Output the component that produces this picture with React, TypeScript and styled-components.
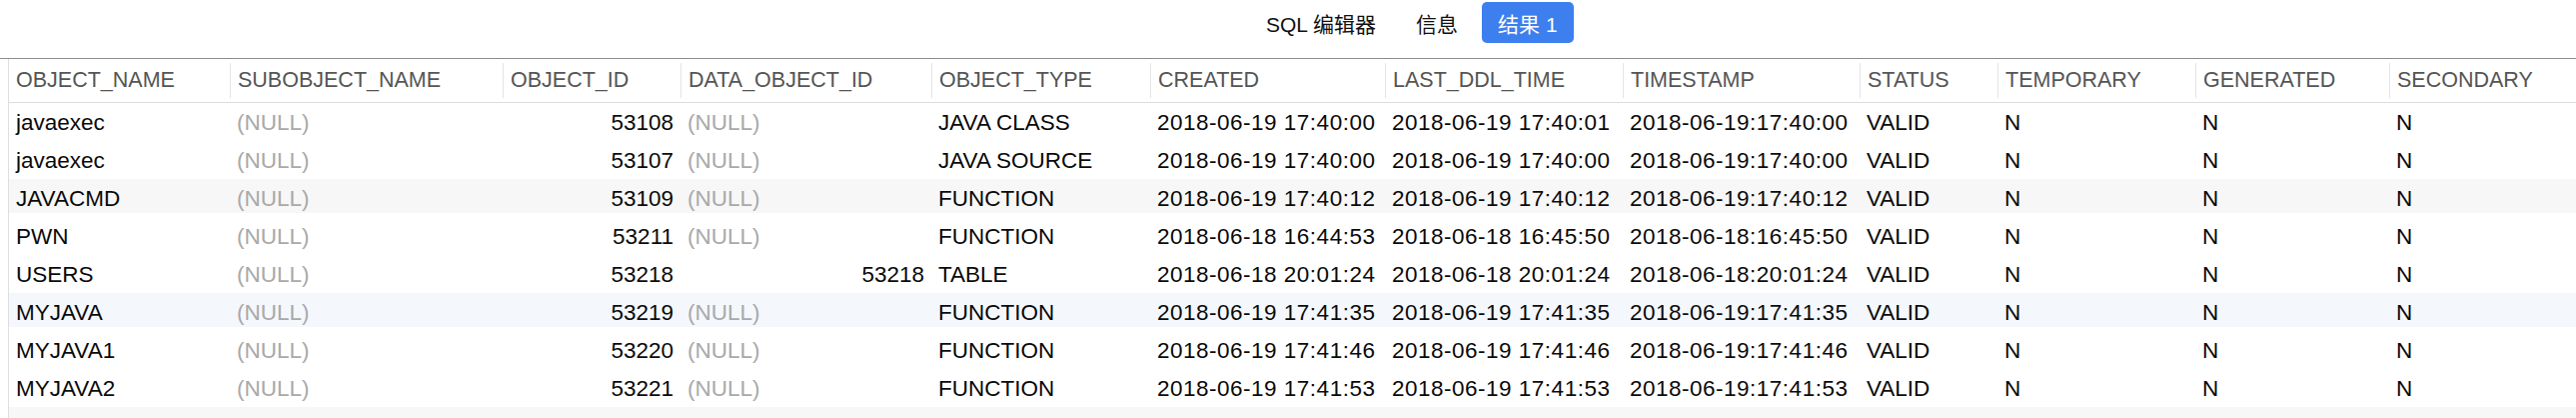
import React from 'react';
import styled, { createGlobalStyle } from 'styled-components';

type Shade = 'gray' | 'blue' | undefined;

const GlobalStyle = createGlobalStyle`
  html, body {
    margin: 0;
    padding: 0;
    background: #ffffff;
    font-family: 'Liberation Sans', 'Noto Sans CJK SC', sans-serif;
  }
`;

const Page = styled.div`
  width: 2578px;
  height: 418px;
  overflow: hidden;
  background: #ffffff;
`;

const TabBar = styled.div`
  height: 59px;
  box-sizing: border-box;
  display: flex;
  align-items: flex-start;
  gap: 8px;
  padding: 2px 0 0 1251px;
  border-bottom: 1px solid #8d8d8d;
`;

const Tab = styled.div<{ active?: boolean }>`
  height: 41px;
  display: flex;
  align-items: center;
  padding: 0 16px;
  border-radius: 5px;
  font-size: 21px;
  background: ${p => (p.active ? '#3d7fee' : 'transparent')};
  color: ${p => (p.active ? '#ffffff' : '#111111')};
  white-space: nowrap;
`;

const COLS = '221px 273px 178px 251px 219px 235px 238px 237px 138px 198px 194px 1fr';

const Table = styled.div`
  margin-left: 8px;
  border-left: 1px solid #dedede;
`;

const HeaderRow = styled.div`
  display: grid;
  grid-template-columns: ${COLS};
  height: 43px;
  align-items: center;
  border-bottom: 1px solid #dcdcdc;
  font-size: 21.5px;
`;

const HeaderCell = styled.div<{ first?: boolean }>`
  height: 35px;
  line-height: 35px;
  padding: 0 7px;
  color: #555555;
  border-left: ${p => (p.first ? 'none' : '1px solid #e4e4e4')};
  white-space: nowrap;
  overflow: hidden;
`;

const shadeColor = (s: Shade) =>
  s === 'gray' ? '#f7f7f7' : s === 'blue' ? '#f4f8fd' : '#ffffff';

const Row = styled.div<{ shade?: Shade }>`
  display: grid;
  grid-template-columns: ${COLS};
  height: 38px;
  font-size: 22.5px;
  background: linear-gradient(
    to bottom,
    ${p => shadeColor(p.shade)} 0,
    ${p => shadeColor(p.shade)} 34px,
    #ffffff 34px
  );
`;

const Cell = styled.div<{ right?: boolean; nil?: boolean; digits?: boolean }>`
  height: 38px;
  box-sizing: border-box;
  padding: 2px 7px 0;
  line-height: 36px;
  text-align: ${p => (p.right ? 'right' : 'left')};
  color: ${p => (p.nil ? '#a9a9a9' : '#0a0a0a')};
  letter-spacing: ${p => (p.digits ? '0.5px' : '0')};
  white-space: nowrap;
  overflow: hidden;
`;

const headers = [
  'OBJECT_NAME', 'SUBOBJECT_NAME', 'OBJECT_ID', 'DATA_OBJECT_ID', 'OBJECT_TYPE', 'CREATED',
  'LAST_DDL_TIME', 'TIMESTAMP', 'STATUS', 'TEMPORARY', 'GENERATED', 'SECONDARY',
];

const NULL = '(NULL)';
const numeric = new Set([2, 3]);
const dates = new Set([5, 6, 7]);

const rows: string[][] = [
  ['javaexec', NULL, '53108', NULL, 'JAVA CLASS', '2018-06-19 17:40:00', '2018-06-19 17:40:01', '2018-06-19:17:40:00', 'VALID', 'N', 'N', 'N'],
  ['javaexec', NULL, '53107', NULL, 'JAVA SOURCE', '2018-06-19 17:40:00', '2018-06-19 17:40:00', '2018-06-19:17:40:00', 'VALID', 'N', 'N', 'N'],
  ['JAVACMD', NULL, '53109', NULL, 'FUNCTION', '2018-06-19 17:40:12', '2018-06-19 17:40:12', '2018-06-19:17:40:12', 'VALID', 'N', 'N', 'N'],
  ['PWN', NULL, '53211', NULL, 'FUNCTION', '2018-06-18 16:44:53', '2018-06-18 16:45:50', '2018-06-18:16:45:50', 'VALID', 'N', 'N', 'N'],
  ['USERS', NULL, '53218', '53218', 'TABLE', '2018-06-18 20:01:24', '2018-06-18 20:01:24', '2018-06-18:20:01:24', 'VALID', 'N', 'N', 'N'],
  ['MYJAVA', NULL, '53219', NULL, 'FUNCTION', '2018-06-19 17:41:35', '2018-06-19 17:41:35', '2018-06-19:17:41:35', 'VALID', 'N', 'N', 'N'],
  ['MYJAVA1', NULL, '53220', NULL, 'FUNCTION', '2018-06-19 17:41:46', '2018-06-19 17:41:46', '2018-06-19:17:41:46', 'VALID', 'N', 'N', 'N'],
  ['MYJAVA2', NULL, '53221', NULL, 'FUNCTION', '2018-06-19 17:41:53', '2018-06-19 17:41:53', '2018-06-19:17:41:53', 'VALID', 'N', 'N', 'N'],
];

const shadeFor = (i: number): Shade => (i % 6 === 2 ? 'gray' : i % 6 === 5 ? 'blue' : undefined);

const App: React.FC = () => (
  <Page>
    <GlobalStyle />
    <TabBar>
      <Tab>SQL 编辑器</Tab>
      <Tab>信息</Tab>
      <Tab active>结果 1</Tab>
    </TabBar>
    <Table>
      <HeaderRow>
        {headers.map((h, i) => (
          <HeaderCell key={h} first={i === 0}>{h}</HeaderCell>
        ))}
      </HeaderRow>
      {rows.map((r, i) => (
        <Row key={i} shade={shadeFor(i)}>
          {r.map((v, j) => (
            <Cell
              key={j}
              nil={v === NULL}
              right={numeric.has(j) && v !== NULL}
              digits={dates.has(j)}
            >
              {v}
            </Cell>
          ))}
        </Row>
      ))}
      <Row shade="gray" />
    </Table>
  </Page>
);

export default App;
